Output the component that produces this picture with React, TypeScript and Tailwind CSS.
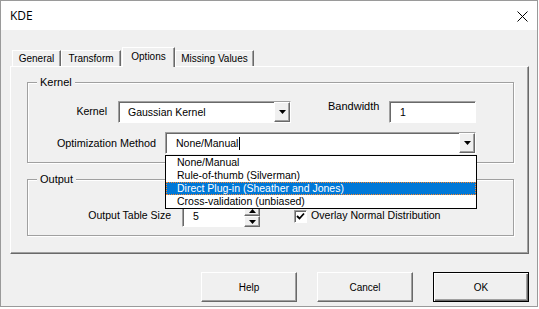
import type { ReactNode } from "react";

const raised =
  "border border-t-white border-l-white border-r-[#696969] border-b-[#696969] shadow-[inset_-1px_-1px_0_#a0a0a0]";
const sunken =
  "border border-t-[#a0a0a0] border-l-[#a0a0a0] border-r-white border-b-white shadow-[inset_1px_1px_0_#696969]";

const TABS = [
  { label: "General", width: "w-[49px] ml-[2px]" },
  { label: "Transform", width: "w-[60px]" },
  { label: "Options", width: "w-[53px] ml-[1px]", active: true },
  { label: "Missing Values", width: "w-[79px]" },
];

const METHODS = [
  "None/Manual",
  "Rule-of-thumb (Silverman)",
  "Direct Plug-in (Sheather and Jones)",
  "Cross-validation (unbiased)",
];

function Arrow({ up }: { up?: boolean }) {
  return (
    <svg width="7" height="4" viewBox="0 0 7 4" className="block">
      <polygon points={up ? "3.5,0 7,4 0,4" : "0,0 7,0 3.5,4"} fill="#000" />
    </svg>
  );
}

function DropButton() {
  return (
    <div className={`w-[16px] h-full bg-[#f0f0f0] flex items-center justify-center shrink-0 ${raised}`}>
      <Arrow />
    </div>
  );
}

function Group({ title, className, children }: { title: string; className: string; children: ReactNode }) {
  return (
    <div
      className={`relative w-[487px] border border-[#a0a0a0] shadow-[inset_1px_1px_0_white,1px_1px_0_white] ${className}`}
    >
      <span className="absolute left-[9px] -top-[8px] bg-[#f0f0f0] px-[3px] leading-[14px] text-[11px]">
        {title}
      </span>
      {children}
    </div>
  );
}

export default function App() {
  return (
    <div className="w-[539px] h-[309px] bg-white font-['Liberation_Sans',Arial,sans-serif] text-black">
      <div className="w-[538px] h-[307px] border border-[#9a9a9a] bg-[#f0f0f0] flex flex-col">
        {/* title bar */}
        <div className="h-[29px] bg-white flex items-center justify-between pl-[9px] pr-[9px] pt-[1px] shrink-0">
          <span className="font-['Open_Sans',sans-serif] text-[12px]">KDE</span>
          <svg width="11" height="11" viewBox="0 0 11 11">
            <path d="M0.5 0.5 L10.5 10.5 M10.5 0.5 L0.5 10.5" stroke="#000" strokeWidth="1" />
          </svg>
        </div>

        <div className="flex-1 pl-[9px] pr-[8px] pt-[17px]">
          {/* tabs */}
          <div className="flex items-end h-[19px]">
            {TABS.map((tab) =>
              tab.active ? (
                <div
                  key={tab.label}
                  className={`${tab.width} h-[20px] -mb-[1px] relative z-10 bg-[#f0f0f0] border-l border-t border-r border-l-white border-t-white border-r-[#696969] shadow-[inset_-1px_0_0_#a0a0a0] text-[10px] leading-[16px] pt-[1px] text-center`}
                >
                  {tab.label}
                </div>
              ) : (
                <div
                  key={tab.label}
                  className={`${tab.width} h-[16px] border-l border-t border-r border-l-white border-t-white border-r-[#696969] shadow-[inset_-1px_0_0_#a0a0a0] text-[10px] leading-[15px] text-center`}
                >
                  {tab.label}
                </div>
              )
            )}
          </div>

          {/* tab page */}
          <div className={`h-[188px] pl-[16px] pt-[15px] ${raised}`}>
            <Group title="Kernel" className="h-[81px] pt-[18px]">
              <div className="flex items-center h-[22px]">
                <span className="w-[79px] text-right text-[10.6px]">Kernel</span>
                <div className={`ml-[11px] w-[173px] h-[22px] bg-white flex ${sunken}`}>
                  <span className="flex-1 pl-[9px] text-[10.5px] leading-[20px]">Gaussian Kernel</span>
                  <DropButton />
                </div>
                <span className="ml-[37px] w-[51px] self-start -mt-[2px] text-[11px] leading-[14px] whitespace-nowrap">
                  Bandwidth
                </span>
                <div className={`ml-[10px] w-[87px] h-[22px] bg-white pl-[10px] text-[10.5px] leading-[20px] ${sunken}`}>
                  1
                </div>
              </div>

              <div className="flex items-center h-[22px] mt-[9px]">
                <span className="w-[128px] text-right text-[10.8px] whitespace-nowrap">Optimization Method</span>
                <div className="relative ml-[9px] z-20">
                  <div className={`w-[311px] h-[22px] bg-white flex ${sunken}`}>
                    <span className="flex-1 pl-[10px] text-[10.5px] leading-[20px] flex items-center">
                      None/Manual
                      <span className="ml-[1px] w-px h-[13px] bg-black" />
                    </span>
                    <DropButton />
                  </div>
                  {/* open dropdown list */}
                  <div className="absolute left-0 top-[23px] w-[312px] bg-white border border-black">
                    {METHODS.map((m, i) =>
                      i === 2 ? (
                        <div
                          key={m}
                          className="h-[13px] pl-[10px] leading-[11px] text-[10.5px] bg-[#0078d7] text-white border border-dotted border-[#ff8728]"
                        >
                          {m}
                        </div>
                      ) : (
                        <div key={m} className="h-[13px] pl-[11px] leading-[13px] text-[10.5px]">
                          {m}
                        </div>
                      )
                    )}
                  </div>
                </div>
              </div>
            </Group>

            <Group title="Output" className="h-[57px] mt-[16px] pt-[25px]">
              <div className="flex items-center h-[22px]">
                <span className="w-[143px] text-right text-[10.5px] whitespace-nowrap">Output Table Size</span>
                <div className={`ml-[11px] w-[62px] h-[22px] bg-white pl-[10px] text-[10.5px] leading-[20px] ${sunken}`}>
                  5
                </div>
                <div className="w-[16px] h-[22px] flex flex-col">
                  <div className={`h-[11px] bg-[#f0f0f0] flex items-center justify-center ${raised}`}>
                    <Arrow up />
                  </div>
                  <div className={`h-[11px] bg-[#f0f0f0] flex items-center justify-center ${raised}`}>
                    <Arrow />
                  </div>
                </div>
                <div className={`ml-[34px] w-[13px] h-[13px] bg-white flex items-center justify-center ${sunken}`}>
                  <svg width="9" height="9" viewBox="0 0 9 9">
                    <path d="M1 4 L3.5 6.5 L8 1.5" stroke="#000" strokeWidth="1.8" fill="none" />
                  </svg>
                </div>
                <span className="ml-[4px] text-[10.6px] whitespace-nowrap">Overlay Normal Distribution</span>
              </div>
            </Group>
          </div>

          {/* buttons */}
          <div className="flex justify-end gap-[20px] mt-[18px]">
            <button className={`w-[96px] h-[30px] bg-[#f0f0f0] text-[10px] ${raised}`}>Help</button>
            <button className={`w-[96px] h-[30px] bg-[#f0f0f0] text-[10px] ${raised}`}>Cancel</button>
            <button
              className="w-[96px] h-[30px] bg-[#f0f0f0] text-[10px] border border-black shadow-[inset_1px_1px_0_white,inset_-1px_-1px_0_#696969,inset_-2px_-2px_0_#a0a0a0]"
            >
              OK
            </button>
          </div>
        </div>
      </div>
    </div>
  );
}
